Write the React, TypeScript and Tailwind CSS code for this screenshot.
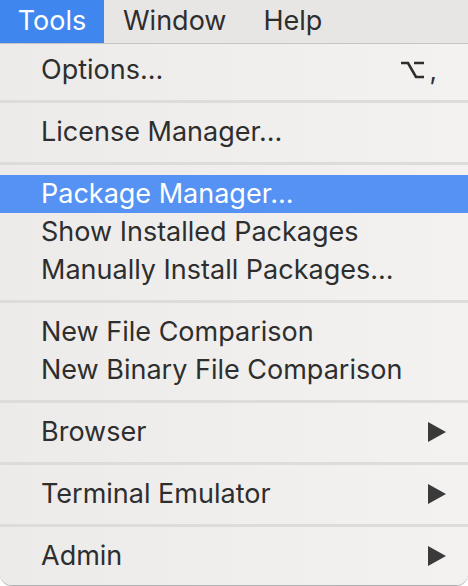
import React from "react";

type Item =
  | { kind: "item"; label: string; shortcut?: boolean; submenu?: boolean; active?: boolean }
  | { kind: "sep" };

const items: Item[] = [
  { kind: "item", label: "Options...", shortcut: true },
  { kind: "sep" },
  { kind: "item", label: "License Manager..." },
  { kind: "sep" },
  { kind: "item", label: "Package Manager...", active: true },
  { kind: "item", label: "Show Installed Packages" },
  { kind: "item", label: "Manually Install Packages..." },
  { kind: "sep" },
  { kind: "item", label: "New File Comparison" },
  { kind: "item", label: "New Binary File Comparison" },
  { kind: "sep" },
  { kind: "item", label: "Browser", submenu: true },
  { kind: "sep" },
  { kind: "item", label: "Terminal Emulator", submenu: true },
  { kind: "sep" },
  { kind: "item", label: "Admin", submenu: true },
];

const Arrow = () => (
  <svg width="18" height="20" viewBox="0 0 18 20" className="shrink-0">
    <path d="M0 0 L18 10 L0 20 Z" fill="#3a3a3a" />
  </svg>
);

// option key glyph, drawn so its weight matches the menu font
const OptionKey = () => (
  <svg width="23" height="18" viewBox="0 0 23 18" className="shrink-0">
    <path
      d="M0 2 H7 L15 16 H23 M13 2 H23"
      fill="none"
      stroke="#2e2e2e"
      strokeWidth="2.6"
    />
  </svg>
);

export default function App() {
  return (
    <div
      className="w-[468px] h-[586px] bg-white overflow-hidden text-[#2e2e2e]"
      style={{ fontFamily: "Inter, 'Noto Sans', sans-serif" }}
    >
      {/* menu bar */}
      <div className="flex h-[44px] items-center bg-[#e8e6e5] border-b border-[#c6c5c4] text-[27px]">
        <div className="h-full w-[104px] flex items-center justify-center bg-[#3f86ef] text-white">
          Tools
        </div>
        <div className="pl-[19px]">Window</div>
        <div className="pl-[37px]">Help</div>
      </div>

      {/* dropdown */}
      <div className="h-[541px] pt-[7px] pb-[9px] bg-gradient-to-r from-[#ecebea] to-[#f3f2f0] rounded-b-[12px] shadow-[0_1px_1px_rgba(0,0,0,0.35)] text-[27px]">
        {items.map((it, i) =>
          it.kind === "sep" ? (
            <div key={i} className="h-[24px] flex items-center">
              <div className="h-[3px] w-full bg-[#dddcdb]" />
            </div>
          ) : (
            <div
              key={i}
              className={
                "h-[38px] flex items-center pl-[41px] pr-[22px] " +
                (it.active ? "bg-[#5592f3] text-white" : "")
              }
            >
              <span className="flex-1 whitespace-nowrap">{it.label}</span>
              {it.shortcut && (
                <span className="flex items-center gap-[6px] pr-[9px] text-[26px]">
                  <OptionKey />
                  <span>,</span>
                </span>
              )}
              {it.submenu && <Arrow />}
            </div>
          )
        )}
      </div>
    </div>
  );
}
